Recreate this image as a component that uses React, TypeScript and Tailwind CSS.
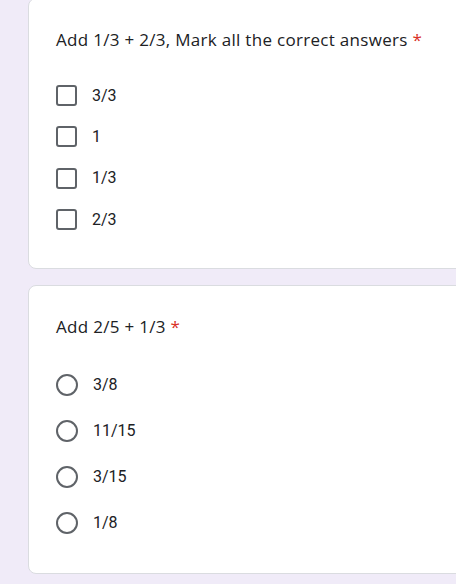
import React from 'react';

type Question = {
  title: string;
  kind: 'checkbox' | 'radio';
  options: string[];
};

const questions: Question[] = [
  { title: 'Add 1/3 + 2/3, Mark all the correct answers', kind: 'checkbox', options: ['3/3', '1', '1/3', '2/3'] },
  { title: 'Add 2/5 + 1/3', kind: 'radio', options: ['3/8', '11/15', '3/15', '1/8'] },
];

const Checkbox: React.FC = () => (
  <div className="w-[21px] h-[21px] rounded-[3px] border-2 border-[#5f6368] shrink-0" />
);

const Radio: React.FC = () => (
  <div className="w-[22px] h-[22px] rounded-full border-2 border-[#5f6368] shrink-0" />
);

const QuestionCard: React.FC<{ q: Question; first?: boolean }> = ({ q, first }) => {
  const rowH = q.kind === 'checkbox' ? 'h-[41.3px]' : 'h-[46px]';
  return (
    <div
      className={
        'w-[460px] bg-white rounded-[8px] border border-[#dadce0] pl-[27px] ' +
        (first ? '-mt-[2px] pt-[29px] pb-[28px]' : 'pt-[29px] pb-[27px]')
      }
    >
      <div
        className="text-[17px] leading-[24px] text-[#202124] tracking-[0.3px]"
        style={{ fontFamily: '"Open Sans", Roboto, sans-serif' }}
      >
        {q.title} <span className="text-[#d93025]">*</span>
      </div>
      <div className="mt-[23px]">
        {q.options.map((opt) => (
          <div key={opt} className={'flex items-center ' + rowH}>
            {q.kind === 'checkbox' ? <Checkbox /> : <Radio />}
            <span className="ml-[15px] text-[16px] text-[#202124]">{opt}</span>
          </div>
        ))}
      </div>
    </div>
  );
};

export default function App() {
  return (
    <div
      className="h-[584px] w-[456px] overflow-hidden bg-[#f0ebf8] pl-[28px]"
      style={{ fontFamily: 'Roboto, "Noto Sans", sans-serif' }}
    >
      <div className="flex flex-col gap-[16px]">
        {questions.map((q, i) => (
          <QuestionCard key={q.title} q={q} first={i === 0} />
        ))}
      </div>
    </div>
  );
}
